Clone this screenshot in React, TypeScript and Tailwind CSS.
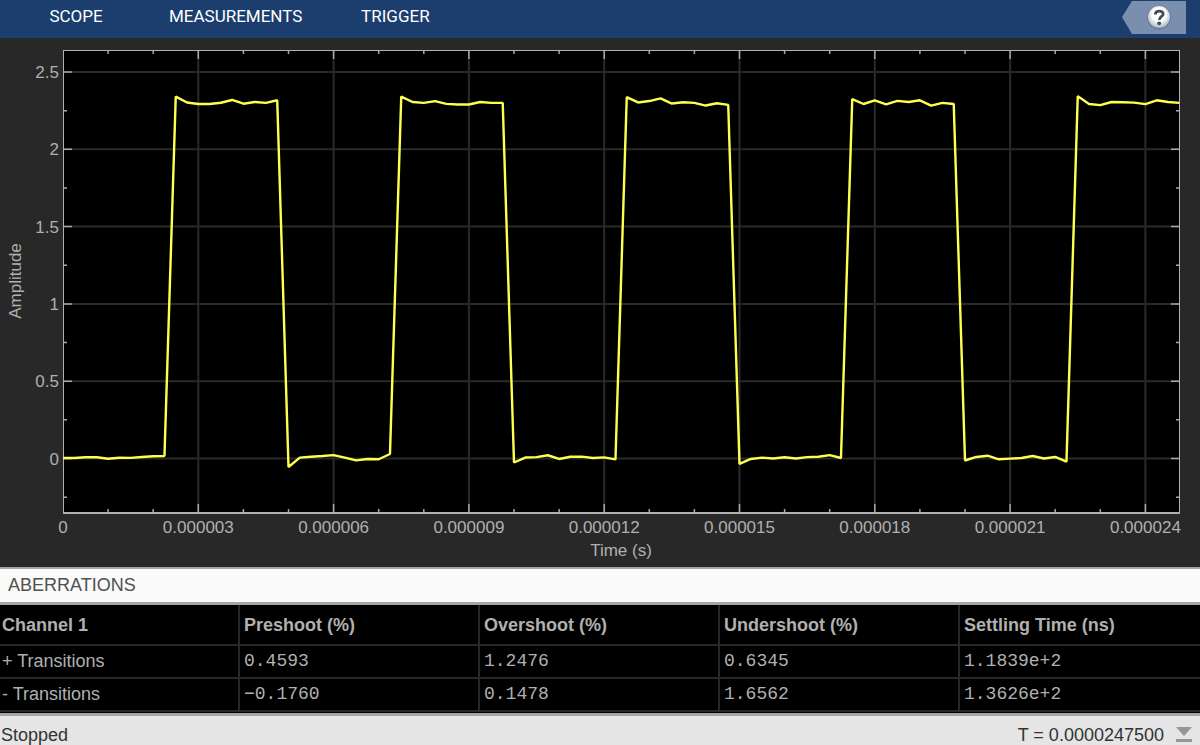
const tabs = ["SCOPE", "MEASUREMENTS", "TRIGGER"];

const columns = [
  "Channel 1",
  "Preshoot (%)",
  "Overshoot (%)",
  "Undershoot (%)",
  "Settling Time (ns)",
];

const rows = [
  { label: "+ Transitions", values: ["0.4593", "1.2476", "0.6345", "1.1839e+2"] },
  { label: "- Transitions", values: ["−0.1760", "0.1478", "1.6562", "1.3626e+2"] },
];

// Channel 1 amplitude, one sample every 0.25 us
const samples = [
  0.003, 0.003, 0.008, 0.008, -0.002, 0.005, 0.004, 0.01, 0.015, 0.016,
  2.341, 2.303, 2.293, 2.293, 2.301, 2.319, 2.295, 2.306, 2.3, 2.317,
  -0.055, 0.006, 0.011, 0.016, 0.022, 0.006, -0.012, -0.003, -0.005, 0.029,
  2.341, 2.306, 2.3, 2.312, 2.294, 2.29, 2.29, 2.306, 2.3, 2.3,
  -0.026, 0.006, 0.009, 0.021, -0.003, 0.011, 0.012, 0.003, 0.007, -0.006,
  2.338, 2.303, 2.312, 2.329, 2.296, 2.304, 2.3, 2.283, 2.298, 2.287,
  -0.035, -0.003, 0.006, 0, 0.008, 0, 0.009, 0.011, 0.022, 0.003,
  2.325, 2.293, 2.316, 2.291, 2.313, 2.306, 2.317, 2.283, 2.3, 2.293,
  -0.013, 0.01, 0.018, -0.005, -0.001, 0.003, 0.016, 0, 0.01, -0.02,
  2.344, 2.293, 2.286, 2.306, 2.304, 2.302, 2.292, 2.317, 2.306, 2.3,
];

const plot = { left: 63, right: 1180, top: 12, bottom: 475 };
const xAt = (us: number) => plot.left + us * 45.1;
const yAt = (amp: number) => 420.5 - amp * 154.6;

const xMajor = [0, 3, 6, 9, 12, 15, 18, 21, 24];
const xMinor = Array.from({ length: 25 }, (_, i) => i);
const yMajor = [0, 0.5, 1, 1.5, 2, 2.5];
const yMinor = Array.from({ length: 12 }, (_, i) => i * 0.25 - 0.25);

function Scope() {
  const trace = samples.map((v, i) => `${xAt(i * 0.25)},${yAt(v)}`).join(" ");

  return (
    <svg
      viewBox="0 0 1200 529"
      className="block w-full h-auto text-[17px]"
      fill="#b0b0b0"
      role="img"
      aria-label="Amplitude over time"
    >
      <rect x={plot.left} y={plot.top} width={plot.right - plot.left} height={plot.bottom - plot.top} fill="#000" />

      {/* Grid */}
      <g stroke="#2a2a2a" strokeWidth="2">
        {xMajor.slice(1).map((t) => (
          <line key={t} x1={xAt(t)} x2={xAt(t)} y1={plot.top} y2={plot.bottom} />
        ))}
        {yMajor.map((a) => (
          <line key={a} x1={plot.left} x2={plot.right} y1={yAt(a)} y2={yAt(a)} />
        ))}
      </g>

      {/* Ticks */}
      <g stroke="#a8a8a8" strokeWidth="1.5">
        {xMinor.slice(1).map((t) => {
          const len = t % 3 === 0 ? 9 : 4;
          return (
            <path
              key={t}
              d={`M${xAt(t)} ${plot.top}v${len}M${xAt(t)} ${plot.bottom}v${-len}`}
            />
          );
        })}
        {yMinor.map((a) => {
          const len = a % 0.5 === 0 ? 9 : 4;
          return (
            <path key={a} d={`M${plot.left} ${yAt(a)}h${len}M${plot.right} ${yAt(a)}h${-len}`} />
          );
        })}
      </g>

      {/* Frame */}
      <path d="M63.5 12V475M63 12.5H1180M1179.5 12V475" fill="none" stroke="#b0b0b0" />
      <path d="M63 475H1180" fill="none" stroke="#b0b0b0" strokeWidth="2" />

      <polyline points={trace} fill="none" stroke="#ffff50" strokeWidth="2.4" strokeLinejoin="bevel" />

      {xMajor.map((t) => (
        <text key={t} x={xAt(t)} y="495" textAnchor="middle">
          {t === 0 ? "0" : `0.0000${String(t).padStart(2, "0")}`}
        </text>
      ))}
      {yMajor.map((a) => (
        <text key={a} x="59" y={yAt(a) + 6} textAnchor="end">
          {a}
        </text>
      ))}
      <text x="621" y="518" textAnchor="middle">
        Time (s)
      </text>
      <text transform="translate(21 243) rotate(-90)" textAnchor="middle">
        Amplitude
      </text>
    </svg>
  );
}

function HelpIcon() {
  return (
    <svg width="64" height="34" viewBox="0 0 64 34">
      <defs>
        <radialGradient id="ball" cx="0.5" cy="0.4" r="0.6">
          <stop offset="0.5" stopColor="#ffffff" />
          <stop offset="1" stopColor="#a9b4bf" />
        </radialGradient>
      </defs>
      <path d="M0 17L10 1H64V34H10Z" fill="#7a8fad" />
      <circle cx="37" cy="17.5" r="12" fill="#647c9c" />
      <circle cx="37" cy="17" r="11" fill="url(#ball)" />
      <path
        d="M33.3 14.5C33.3 10 41.2 10 41.2 14C41.2 16.5 37.3 16.5 37.3 20"
        fill="none"
        stroke="#414b5a"
        strokeWidth="2.8"
      />
      <circle cx="37.2" cy="23.3" r="1.9" fill="#414b5a" />
    </svg>
  );
}

export default function App() {
  return (
    <div className="flex flex-col min-h-screen bg-[#e5e5e5] font-['Liberation_Sans',Arial,sans-serif]">
      <header className="flex items-start justify-between h-[38px] pl-3 pr-[14px] bg-[#1b3e6f]">
        <nav className="flex">
          {tabs.map((tab) => (
            <button
              key={tab}
              type="button"
              className="min-w-32 h-[33px] px-[29px] font-[Roboto,sans-serif] text-[17px] text-white"
            >
              {tab}
            </button>
          ))}
        </nav>
        <button type="button" aria-label="Help">
          <HelpIcon />
        </button>
      </header>

      <main className="bg-[#282828]">
        <Scope />
      </main>

      <section className="bg-black border-b-3 border-[#a5a5a5]">
        <h2 className="h-[38px] pl-2 border-t-2 border-b-3 border-[#a5a5a5] bg-[#fafafa] text-lg leading-[33px] text-[#505050]">
          ABERRATIONS
        </h2>
        <table className="w-full mb-px table-fixed border-separate border-spacing-0 text-left text-lg text-[#b0b0b0]">
          <thead>
            <tr>
              {columns.map((column) => (
                <th
                  key={column}
                  scope="col"
                  className="h-[41px] p-0 pl-1 first:pl-[2px] border-b-2 border-r-2 last:border-r-0 border-[#282828] font-bold"
                >
                  {column}
                </th>
              ))}
            </tr>
          </thead>
          <tbody>
            {rows.map(({ label, values }) => (
              <tr key={label}>
                <th
                  scope="row"
                  className="h-[33px] p-0 pb-[2px] pl-[2px] border-b-2 border-r-2 border-[#282828] font-normal leading-7"
                >
                  {label}
                </th>
                {values.map((value) => (
                  <td
                    key={value}
                    className="h-[33px] p-0 pb-[2px] pl-1 border-b-2 border-r-2 last:border-r-0 border-[#282828] font-['Liberation_Mono',monospace] leading-7"
                  >
                    {value}
                  </td>
                ))}
              </tr>
            ))}
          </tbody>
        </table>
      </section>

      <footer className="flex items-center justify-between h-[29px] pt-2 pl-px pr-2 text-lg leading-5 text-[#333333]">
        <span>Stopped</span>
        <div className="flex items-center gap-3">
          <span>T = 0.0000247500</span>
          <button type="button" aria-label="Collapse panel">
            <svg width="16" height="16" viewBox="0 0 16 16" fill="#969696">
              <path d="M0 0H16L8 9Z" />
              <path d="M0 12H16V15H0Z" />
            </svg>
          </button>
        </div>
      </footer>
    </div>
  );
}
